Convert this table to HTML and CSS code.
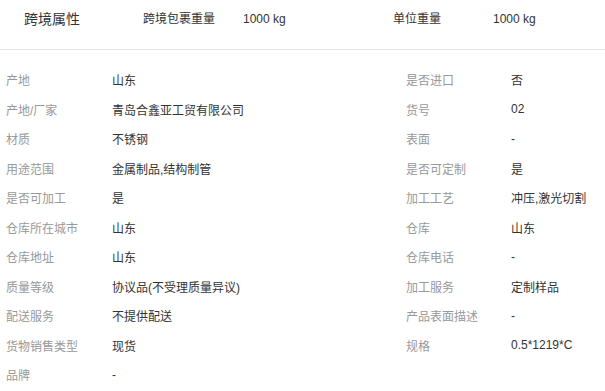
FILE: index.html
```html
<!DOCTYPE html>
<html lang="zh-CN">
<head>
    <meta charset="UTF-8">
    <meta name="viewport" content="width=device-width, initial-scale=1.0">
    <title>商品属性</title>
    <link rel="stylesheet" href="styles.css">
</head>
<body>
    <div class="attr-head">
        <h2 class="attr-title">跨境属性</h2>
        <div class="head-item">
            <span class="head-label">跨境包裹重量</span>
            <span class="head-value">1000 kg</span>
        </div>
        <div class="head-item">
            <span class="head-label">单位重量</span>
            <span class="head-value">1000 kg</span>
        </div>
    </div>

    <div class="attr-list">
        <span class="label">产地</span><span class="value">山东</span>
        <span class="label">是否进口</span><span class="value">否</span>

        <span class="label">产地/厂家</span><span class="value">青岛合鑫亚工贸有限公司</span>
        <span class="label">货号</span><span class="value">02</span>

        <span class="label">材质</span><span class="value">不锈钢</span>
        <span class="label">表面</span><span class="value">-</span>

        <span class="label">用途范围</span><span class="value">金属制品,结构制管</span>
        <span class="label">是否可定制</span><span class="value">是</span>

        <span class="label">是否可加工</span><span class="value">是</span>
        <span class="label">加工工艺</span><span class="value">冲压,激光切割</span>

        <span class="label">仓库所在城市</span><span class="value">山东</span>
        <span class="label">仓库</span><span class="value">山东</span>

        <span class="label">仓库地址</span><span class="value">山东</span>
        <span class="label">仓库电话</span><span class="value">-</span>

        <span class="label">质量等级</span><span class="value">协议品(不受理质量异议)</span>
        <span class="label">加工服务</span><span class="value">定制样品</span>

        <span class="label">配送服务</span><span class="value">不提供配送</span>
        <span class="label">产品表面描述</span><span class="value">-</span>

        <span class="label">货物销售类型</span><span class="value">现货</span>
        <span class="label">规格</span><span class="value">0.5*1219*C</span>

        <span class="label">品牌</span><span class="value">-</span>
    </div>
</body>
</html>
```

FILE: styles.css
```css
* {
    margin: 0;
    padding: 0;
    box-sizing: border-box;
}

body {
    font-family: "Liberation Sans", "Noto Sans CJK SC", sans-serif;
    font-size: 12px;
    color: #333;
    background-color: #fff;
}

/* Cross-border header */
.attr-head {
    display: flex;
    align-items: center;
    height: 50px;
    padding: 0 0 14px 24px;
    border-bottom: 1px solid #e6e6e6;
}

.attr-title {
    flex: 0 0 119px;
    font-size: 14px;
    font-weight: normal;
    color: #333;
}

.head-item {
    display: flex;
    align-items: baseline;
    flex: 0 0 250px;
}

.head-item:last-child {
    flex: 1 1 auto;
    min-width: 0;
}

.head-label {
    width: 100px;
    color: #333;
}

.head-value {
    color: #333;
}

/* Attribute table */
.attr-list {
    display: grid;
    grid-template-columns: 106px 294px 105px 1fr;
    grid-auto-rows: 29.5px;
    align-items: center;
    padding: 15px 0 0 6px;
}

.label {
    color: #999;
}

.value {
    color: #333;
}
```
